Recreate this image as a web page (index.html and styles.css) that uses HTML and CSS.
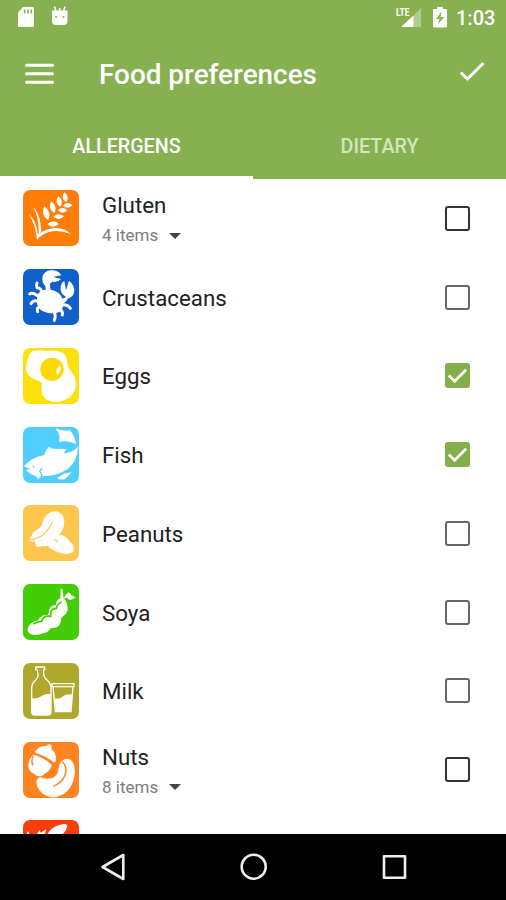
FILE: index.html
```html
<!DOCTYPE html>
<html lang="en">
<head>
<meta charset="utf-8">
<title>Food preferences</title>
<link rel="stylesheet" href="styles.css">
</head>
<body>
<div class="screen">
  <header class="header">
    <div class="status">
      <svg class="status-left" viewBox="0 0 253 35" aria-hidden="true">
        <path fill="#fff" d="M23 7h9.500q1.500 0 1.500 1.500v17q0 1.500-1.500 1.500h-13q-1.500 0-1.500-1.500V12.500z"/>
        <path stroke="#87b150" stroke-width="1.600" d="M24.600 9.500v4M28 9.500v4M31.300 9.500v4"/>
        <path fill="#fff" d="M52 10.500h15.500v10.500q0 4-4 4h-7.500q-4 0-4-4z"/>
        <path stroke="#fff" stroke-width="1.500" d="M54.500 6.500l1.500 5M65 6.500l-1.500 5M59.700 8v4"/>
        <circle cx="56" cy="17" r="1" fill="#87b150"/><circle cx="63.500" cy="17" r="1" fill="#87b150"/>
      </svg>
      <svg class="status-right" viewBox="390 0 60 35" aria-hidden="true">
        <path fill="#fff" opacity=".35" d="M421 8v19h-19z"/>
        <path fill="#fff" d="M413.500 15.500V27H401z"/>
        <text class="lte" x="396" y="16" textLength="13.500" lengthAdjust="spacingAndGlyphs">LTE</text>
        <path fill="#fff" d="M437 7h6v2h3q1 0 1 1v16q0 1.500-1.500 1.500h-11q-1.500 0-1.500-1.500V10q0-1 1-1h3z"/>
        <path fill="#87b150" d="M441.500 11.500l-5.500 7.500h3.500l-1.500 5.500 6-7.500h-3.500z"/>
      </svg>
      <span class="clock">1:03</span>
    </div>
    <div class="toolbar">
      <svg class="menu" viewBox="0 0 30 22" aria-hidden="true"><path d="M2.500 2.200h26M2.500 10.700h26M2.500 19.200h26"/></svg>
      <h1>Food preferences</h1>
      <svg class="done" viewBox="0 0 26 22" aria-hidden="true"><path d="M1.800 11.500l6.700 6.500L24.500 2"/></svg>
    </div>
    <nav class="tabs"><span class="tab active">ALLERGENS</span><span class="tab">DIETARY</span></nav>
  </header>

  <main class="list">
    <div class="row">
      <svg class="tile gluten" viewBox="24 30 168 168" aria-hidden="true">
        <g fill="#fff"><path d="M148 37q18 15 5 29-18-9-5-29zM130 48q18 15 6 32-20-11-6-32zM108 64q20 14 11 36-22-11-11-36zM88 79q23 17 12 42-25-17-12-42zM143 77q13-15 30-1-14 14-30 1zM128 91q14-13 29-1-13 16-29 1zM115 110q16-14 32-1-15 16-32 1zM97 132q19-16 35 0-19 16-35 0z"/>
        <path d="M41 102q24 20 27 61 23-16 53-19 28-1 46 18-52-20-89 6-6 3-12 12-4-47-25-78zM54 82q21 15 25 72l-8 7q1-55-17-79z"/></g>
      </svg>
      <div class="text"><span class="name">Gluten</span><span class="sub">4 items<i class="caret"></i></span></div>
      <span class="box dark"></span>
    </div>
    <div class="row">
      <svg class="tile crab" viewBox="24 28 168 168" aria-hidden="true">
        <path fill="#fff" d="M70 101q14-15 38-11 26 5 35 27 5 19-4 37-18 11-42 5-26-6-31-27-2-17 4-31z"/>
        <path fill="#fff" d="M91 80q-12-13-8-31 7-18 30-17 19 2 26 15l-25 5 24 6q-9 11-26 8-9 4-12 16zM142 124q4-9 11-13-19-9-16-29 2-13 11-18l5 28 9-29q16 13 16 31-2 18-20 23-4 9-14 15z"/>
        <g fill="none" stroke="#fff" stroke-width="9" stroke-linecap="round" stroke-linejoin="round"><path stroke-width="14" d="M98 76l2 20"/><path d="M82 102Q79 84 66 84q-3-7 0-14M73 112Q53 95 44 103M72 125q-18-6-24 7M77 142q-14 0-9 14M116 155q8 12 2 27M131 148q14 5 11 18M137 136q20-3 29 10M139 126l9-7"/></g>
      </svg>
      <div class="text"><span class="name">Crustaceans</span></div>
      <span class="box"></span>
    </div>
    <div class="row">
      <svg class="tile egg" viewBox="24 30 168 168" aria-hidden="true">
        <path fill="#fff" d="M53 39q20-4 43 0 28-5 49 6 11 9 13 35 1 10 13 23 17 27 10 51-13 32-51 38-37 2-47-20-5-12-2-36-10-9-28-15-20-10-20-32 3-22 9-37 3-9 11-13z"/>
        <circle cx="111" cy="94" r="35" fill="#fed900"/><path fill="#fff" d="M135 82q7 17-9 30-7-19 9-30z"/>
      </svg>
      <div class="text"><span class="name">Eggs</span></div>
      <span class="box checked"><svg viewBox="0 0 26 26" aria-hidden="true"><path d="M4 13l6 6L22 7"/></svg></span>
    </div>
    <div class="row">
      <svg class="tile fish" viewBox="24 28 168 168" aria-hidden="true">
        <path fill="#fff" d="M121 31q18 11 44 7 13 14 18 41-25-13-52-5 9-20-10-43zM27 146q22-27 61-34 3-14 14-25l9 6 42 1-6 14q30-4 42-22-1 46-32 69-33 22-78 21l-9 8-8-9q-18-5-29-17l13-4q-8-3-19-8zM126 182l20-14 24-4q-9 10-20 20-12 4-24-2z"/>
        <circle cx="56" cy="147" r="2.500" fill="#50cfff"/><path fill="none" stroke="#50cfff" stroke-width="4" d="M82 153q-8 3-7 9 8 7 3 17"/>
      </svg>
      <div class="text"><span class="name">Fish</span></div>
      <span class="box checked"><svg viewBox="0 0 26 26" aria-hidden="true"><path d="M4 13l6 6L22 7"/></svg></span>
    </div>
    <div class="row">
      <svg class="tile peanut" viewBox="24 28 168 168" aria-hidden="true">
        <path fill="#fff" d="M99 147q18-5 30-29 17-2 27 9 6 8 14 16 11 13 4 26-13 10-35 4-13-5-24-9-13-6-16-17z"/>
        <path fill="#fff" d="M108 49q22-8 36 13 9 20-3 43-7 12-15 21-9 17-23 23-10 4-21 2-12 5-19 1l-6-13-14-5q0-8 7-13 3-14 18-20 13-7 17-28 9-18 23-24z"/>
        <path fill="none" stroke="#ffc64d" stroke-width="3.500" d="M113 78q-9 19-22 33-14 16-37 19M40 133l14-3 7 18M117 132q7 2 12 7"/>
      </svg>
      <div class="text"><span class="name">Peanuts</span></div>
      <span class="box"></span>
    </div>
    <div class="row">
      <svg class="tile soya" viewBox="24 28 168 168" aria-hidden="true">
        <path fill="#fff" d="M142 42q3 17 4 29 10 9 11 24 5 13-6 24l-12 10q0 20-14 29-9 3-17 2-9 15-28 17-23 9-37-1-11-10 0-25 10-11 27-14l5-9q10-8 23-7 6-9 4-16 7-14 21-14l1-10q5-8 12-10l1-29zM147 72q3-13 14-19 5 7 20 15-8 9-18 7l-8-6z"/>
        <path fill="none" stroke="#42cd05" stroke-width="5" d="M55 148q14-9 25-8 5-19 27-15-3-24 17-24 2-13 16-19"/>
      </svg>
      <div class="text"><span class="name">Soya</span></div>
      <span class="box"></span>
    </div>
    <div class="row">
      <svg class="tile milk" viewBox="24 30 168 168" aria-hidden="true">
        <path fill="none" stroke="#fff" stroke-width="4" stroke-linejoin="round" d="M62 42h27v8h-3v13q0 10 10 18 12 10 12 25v70q0 10-10 10H59q-9 0-9-10v-70q0-14 12-25 9-9 7-18l-3-13h-4zM111 92h66v9h-3l-6 75h-47l-7-75h-3zM114 101h60"/>
        <path fill="#fff" d="M51 136q15 2 25-5 15-11 31-8v54q0 8-9 8H60q-9 0-9-8zM117 135q13 5 25-4 13-10 29-6l-5 49h-43z"/>
      </svg>
      <div class="text"><span class="name">Milk</span></div>
      <span class="box"></span>
    </div>
    <div class="row">
      <svg class="tile nuts" viewBox="24 30 168 168" aria-hidden="true">
        <path fill="#fff" d="M95 42l5-5 9 1 1 14q15 12 13 33-2 8-8 6-19-17-50-27-6-2-4-6 10-17 34-16zM56 68q25 5 54 30-2 16-17 24-11 11-20 11-9 0-19-9-13-7-14-23 0-20 16-33zM148 82q19-6 28 14 11 34-10 70-16 24-43 29-30 5-50-20-10-15-9-27 3-11 12-12 20 8 38 1 15-8 16-24 0-20 18-31z"/>
        <path fill="none" stroke="#ff8421" stroke-width="4.500" d="M142 90q12 10 11 28-4 29-38 46M55 72q-8 14-1 28"/>
      </svg>
      <div class="text"><span class="name">Nuts</span><span class="sub">8 items<i class="caret"></i></span></div>
      <span class="box dark"></span>
    </div>
    <div class="row">
      <svg class="tile celery" viewBox="24 266 168 168" aria-hidden="true">
        <path fill="#fff" d="M97 310q11-24 39-30 19-5 21 3-2 15-16 27zM36 301l5 0 3 10h-7zM66 308l8-12 2 8 18-10-6 18H66z"/>
      </svg>
      <div class="text"></div>
    </div>
  </main>

  <footer class="navbar">
    <svg viewBox="60 830 446 70" aria-hidden="true">
      <g fill="none" stroke="#eee" stroke-width="2.600" stroke-linejoin="round"><path d="M102.500 867l20.800-12v24zM384 856.200h21v21.500h-21z"/><circle cx="253.700" cy="866.700" r="12"/></g>
    </svg>
  </footer>
</div>
</body>
</html>
```
FILE: styles.css
```css
* { box-sizing: border-box; }
body { margin: 0; background: #fff; font-family: Roboto, "Liberation Sans", sans-serif; }
.screen { width: 506px; height: 900px; display: flex; flex-direction: column; overflow: hidden; }
svg { display: block; flex: none; }

.header { height: 179px; flex: none; background: #87b150; color: #fff; display: flex; flex-direction: column; }
.status { height: 35px; display: flex; align-items: center; }
.status-left { width: 253px; height: 35px; }
.status-right { width: 60px; height: 35px; margin-left: 137px; }
.lte { font-size: 11.5px; font-weight: 700; fill: #fff; }
.clock { font-size: 20px; font-weight: 500; line-height: 35px; margin: 1px 0 0 6px; }

.toolbar { height: 78px; display: flex; align-items: center; padding: 0 21px 0 24px; }
.menu { width: 30px; height: 22px; }
.menu path { fill: none; stroke: #fff; stroke-width: 3; stroke-linecap: round; }
h1 { margin: 2px 0 0 45px; flex: 1; font-size: 27.9px; font-weight: 500; line-height: 34px; white-space: nowrap; }
.done { width: 26px; height: 22px; margin-top: -5px; }
.done path { fill: none; stroke: #fff; stroke-width: 3; }

.tabs { flex: 1; display: flex; }
.tab { flex: 1; padding-top: 8px; text-align: center; font-size: 19.7px; font-weight: 500; line-height: 52px; color: #d3e5bd; }
.tab.active { color: #fff; border-bottom: 3px solid #fff; }

.list { height: 654.5px; flex: none; overflow: hidden; }
.row { height: 78.75px; display: flex; align-items: center; padding: 0 36px 0 23px; }
.tile { width: 56px; height: 56px; border-radius: 7px; }
.gluten { background: #ff7d08; }
.crab { background: #1060cc; }
.egg { background: #fee00d; }
.fish { background: #50cfff; }
.peanut { background: #ffc64d; }
.soya { background: #42cd05; }
.milk { background: #b0a82c; }
.nuts { background: #ff8421; }
.celery { background: #f93d0a; }

.text { flex: 1; margin-left: 23px; padding-top: 1px; display: flex; flex-direction: column; }
.name { font-size: 22.3px; line-height: 28px; color: #212121; }
.sub { font-size: 17px; line-height: 22px; margin-top: 5px; color: #7d7d7d; display: flex; align-items: center; }
.caret { margin: 1px 0 0 11px; border: 6.5px solid transparent; border-top: 6.5px solid #444; border-bottom: 0; }

.box { width: 25px; height: 25px; border: 2.5px solid #666; border-radius: 3px; }
.box.dark { border-color: #333; }
.box.checked { border: 0; background: #83ae49; }
.box svg { width: 25px; height: 25px; }
.box path { fill: none; stroke: #fff; stroke-width: 2.8; }

.navbar { flex: 1; background: #000; }
.navbar svg { width: 446px; height: 70px; margin: -3.5px 0 0 60px; }
```
